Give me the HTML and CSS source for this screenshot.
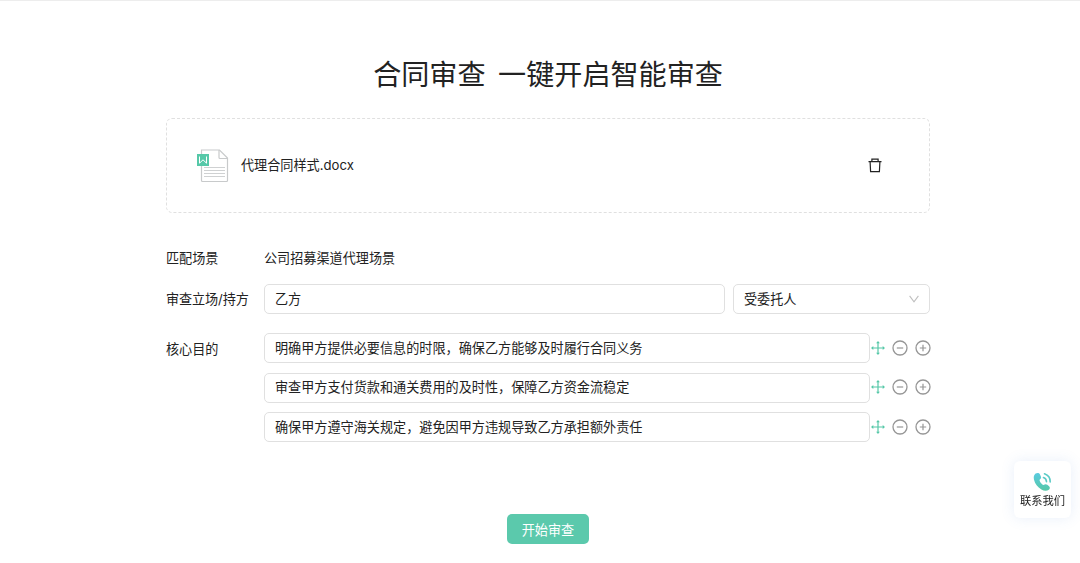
FILE: index.html
```html
<!DOCTYPE html>
<html lang="zh-CN">
<head>
    <meta charset="UTF-8">
    <meta name="viewport" content="width=device-width, initial-scale=1.0">
    <title>合同审查</title>
    <link rel="stylesheet" href="styles.css">
</head>
<body>
    <!-- 图标 -->
    <svg class="sprite" width="0" height="0">
        <symbol id="icon-drag" viewBox="0 0 14 14">
            <path d="M7 1.2v11.6M1.2 7h11.6" stroke="currentColor" stroke-width="1.2" fill="none"/>
            <path d="M7 0l1.9 2.3H5.1zM7 14l1.9-2.3H5.1zM0 7l2.3-1.9v3.8zM14 7l-2.3-1.9v3.8z" fill="currentColor"/>
        </symbol>
        <symbol id="icon-minus" viewBox="0 0 16 16">
            <circle cx="8" cy="8" r="7" stroke="currentColor" stroke-width="1.3" fill="none"/>
            <path d="M4.8 8h6.4" stroke="currentColor" stroke-width="1.2"/>
        </symbol>
        <symbol id="icon-plus" viewBox="0 0 16 16">
            <circle cx="8" cy="8" r="7" stroke="currentColor" stroke-width="1.3" fill="none"/>
            <path d="M4.8 8h6.4M8 4.8v6.4" stroke="currentColor" stroke-width="1.2"/>
        </symbol>
    </svg>

    <main>
        <h1>合同审查&nbsp; 一键开启智能审查</h1>

        <div class="file-box">
            <svg class="file-icon" width="32" height="34" viewBox="0 0 32 34">
                <path d="M4.5 1h18l8 8v22.5a1 1 0 0 1-1 1h-24a1 1 0 0 1-1-1z" fill="#fff" stroke="#c8cacb" stroke-width="1.2"/>
                <path d="M22 1v7.5a1 1 0 0 0 1 1h7.5" fill="none" stroke="#c8cacb" stroke-width="1.2"/>
                <path d="M7 18.5h21M7 21.5h21M7 24.500h21M7 27.500h21" stroke="#cfd1d2"/>
                <rect x="0" y="5" width="12" height="12" fill="#56c8a8"/>
                <path d="M2.5 7.5v6.7L6 10.8l3.5 3.4V7.5" fill="none" stroke="#fff" stroke-width="1"/>
            </svg>
            <span class="file-name">代理合同样式.docx</span>
            <svg class="delete" width="14" height="15" viewBox="0 0 14 15">
                <path d="M0.5 3.6h13M3.9 3.4V1.1h6.2v2.3M2.1 3.8l.5 9.9h8.8l.5-9.9" fill="none" stroke="#222" stroke-width="1.2"/>
            </svg>
        </div>

        <form class="review-form">
            <div class="row scene">
                <label>匹配场景</label>
                <span>公司招募渠道代理场景</span>
            </div>
            <div class="row party">
                <label>审查立场/持方</label>
                <input type="text" value="乙方">
                <div class="select">
                    <span>受委托人</span>
                    <svg width="10" height="8" viewBox="0 0 10 8">
                        <path d="M0.6 0.8L5 6.8l4.4-6" fill="none" stroke="#bfbfbf" stroke-width="1.1"/>
                    </svg>
                </div>
            </div>
            <div class="row goals">
                <label>核心目的</label>
                <div class="goal-list">
                    <div class="goal">
                        <input type="text" value="明确甲方提供必要信息的时限，确保乙方能够及时履行合同义务">
                        <svg class="drag"><use href="#icon-drag"/></svg>
                        <svg class="minus"><use href="#icon-minus"/></svg>
                        <svg class="plus"><use href="#icon-plus"/></svg>
                    </div>
                    <div class="goal">
                        <input type="text" value="审查甲方支付货款和通关费用的及时性，保障乙方资金流稳定">
                        <svg class="drag"><use href="#icon-drag"/></svg>
                        <svg class="minus"><use href="#icon-minus"/></svg>
                        <svg class="plus"><use href="#icon-plus"/></svg>
                    </div>
                    <div class="goal">
                        <input type="text" value="确保甲方遵守海关规定，避免因甲方违规导致乙方承担额外责任">
                        <svg class="drag"><use href="#icon-drag"/></svg>
                        <svg class="minus"><use href="#icon-minus"/></svg>
                        <svg class="plus"><use href="#icon-plus"/></svg>
                    </div>
                </div>
            </div>
            <button type="button" class="submit">开始审查</button>
        </form>
    </main>

    <!-- 悬浮联系按钮 -->
    <a class="contact">
        <svg width="20" height="20" viewBox="0 0 20 20">
            <defs>
                <linearGradient id="phone" x1="0" y1="0" x2="0" y2="1">
                    <stop offset="0" stop-color="#5acbe0"/>
                    <stop offset="1" stop-color="#56c8a8"/>
                </linearGradient>
            </defs>
            <path d="M2.600 1.600C4.300.5 6.200.9 7 2.400l.9 2.200c.5 1.400 0 2.300-1.300 3.200-.5 1.400 2.300 4.900 3.900 5.200 1.500-.9 2.600-1.100 3.800-.2l1.800 1.500c1.200 1.200.9 2.500-.3 3.400-2 1.500-4.800 1.300-7.400-.3C4.600 15.200 2 11.900 1 7.800.4 5.100.9 2.900 2.600 1.600z" fill="url(#phone)"/>
            <path d="M10.500 5.600c1.800.7 2.900 2.200 3 4.100M11.500 1.800c3.700 1.300 5.800 4.200 5.700 8.100" fill="none" stroke="#5bcbc6" stroke-width="1.600" stroke-linecap="round"/>
        </svg>
        <span>联系我们</span>
    </a>
</body>
</html>
```

FILE: styles.css
```css
* {
    box-sizing: border-box;
}
body {
    font-family: Inter, "Noto Sans CJK SC", sans-serif;
    font-size: 13.13px;
    color: #222;
    margin: 0;
    background-color: #fff;
    border-top: 1px solid #ededed;
}
.sprite {
    position: absolute;
}
main {
    width: 764px;
    margin-left: 166px;
    padding-top: 52px;
}
h1 {
    margin: 0 0 25px;
    height: 40px;
    line-height: 40px;
    font-family: "Noto Sans CJK SC", sans-serif;
    font-size: 28.1px;
    font-weight: 400;
    text-align: center;
}
.file-box {
    display: flex;
    align-items: center;
    height: 95px;
    padding: 0 47px 0 30px;
    border: 1px dashed #e0e0e0;
    border-radius: 6px;
}
.file-name {
    flex: 1;
    margin-left: 12px;
    padding-bottom: 2px;
}
.row {
    display: flex;
    align-items: center;
}
.row label {
    width: 98px;
    flex-shrink: 0;
}
.scene {
    height: 30px;
    margin-top: 29px;
}
.party {
    margin-top: 12px;
}
.party label {
    padding-bottom: 2px;
    letter-spacing: -0.1px;
}
input,
.select {
    height: 30px;
    padding: 0 10px 2px;
    border: 1px solid #e0e0e0;
    border-radius: 5px;
    background-color: #fff;
    color: #222;
    font: inherit;
    outline: none;
}
.party input {
    width: 461px;
    margin-right: 8px;
}
.select {
    display: flex;
    align-items: center;
    justify-content: space-between;
    width: 197px;
}
.select svg {
    margin-top: 2px;
}
.goals {
    align-items: flex-start;
    margin-top: 19px;
}
.goals label {
    line-height: 32px;
}
.goal-list {
    display: flex;
    flex-direction: column;
    flex: 1;
    gap: 9.5px;
}
.goal {
    display: flex;
    align-items: center;
}
.goal input {
    flex: 1;
}
.goal svg {
    width: 16px;
    height: 16px;
    margin-bottom: 1px;
    color: #969696;
}
.goal .drag {
    width: 14px;
    height: 14px;
    margin-left: 1px;
    color: #56c8a8;
}
.goal .minus {
    margin: 0 7px 1px;
}
.goal .plus {
    margin-right: -0.5px;
}
.submit {
    display: block;
    width: 82px;
    height: 30px;
    margin: 72px auto 0;
    padding: 1px 0 0;
    border: none;
    border-radius: 5px;
    background-color: #5bc9ac;
    color: #fff;
    font: inherit;
    cursor: pointer;
}
.contact {
    position: fixed;
    top: 461px;
    right: 9px;
    display: flex;
    flex-direction: column;
    align-items: center;
    width: 57px;
    height: 57px;
    padding-top: 11px;
    border-radius: 6px;
    background-color: #fff;
    box-shadow: 0 0 14px rgba(80, 130, 220, 0.13);
    font-size: 11.3px;
    line-height: 18px;
}
```
